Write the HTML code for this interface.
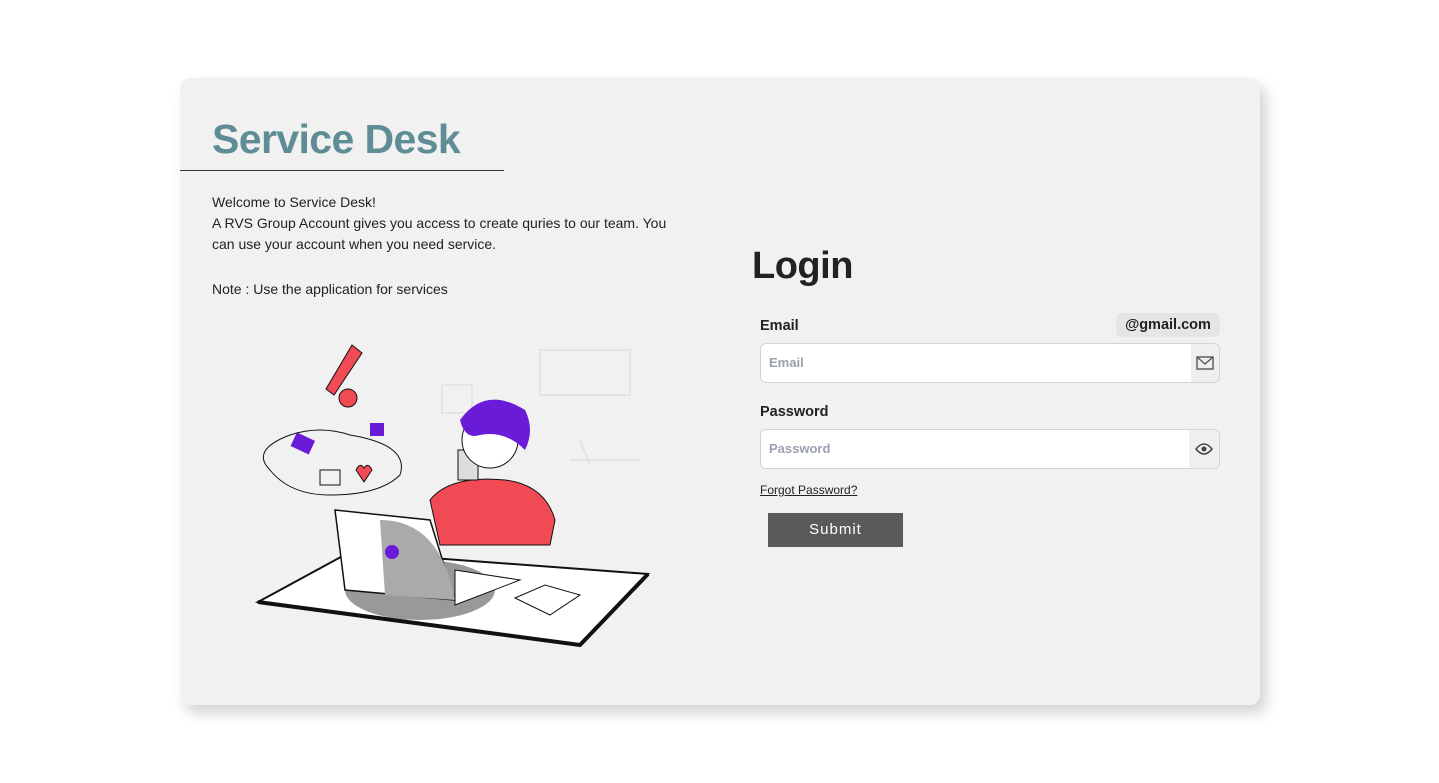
<!DOCTYPE html>
<html><head><meta charset="utf-8"><style>
*{margin:0;padding:0;box-sizing:border-box}
body{width:1439px;height:783px;background:#fff;font-family:"Liberation Sans",sans-serif;position:relative;overflow:hidden}
.card{position:absolute;left:180px;top:78px;width:1080px;height:627px;background:#f1f1f1;border-radius:10px;box-shadow:6px 8px 14px rgba(0,0,0,.18)}
.abs{position:absolute}
h1{position:absolute;left:32px;top:38px;font-size:41px;font-weight:bold;color:#5f8d96;letter-spacing:-0.6px}
.hr{position:absolute;left:0;top:92px;width:324px;height:1px;background:#333}
.txt{position:absolute;left:32px;top:114px;font-size:14px;line-height:21px;color:#222;width:470px}
.lbl{font-size:14.5px;font-weight:bold;color:#222}
.inp{position:absolute;left:580px;width:460px;height:40px;background:#fff;border:1px solid #d2d2d8;border-radius:6px;overflow:hidden}
.inp span{position:absolute;left:8px;top:11px;font-size:13px;color:#9aa0ae;font-weight:bold}
.inp .ic{position:absolute;right:0;top:0;width:28px;height:38px;background:#efefef;display:flex;align-items:center;justify-content:center}
</style></head><body>
<div class="card">
<h1>Service Desk</h1>
<div class="hr"></div>
<div class="txt">Welcome to Service Desk!<br>A RVS Group Account gives you access to create quries to our team. You can use your account when you need service.<br><br><span style="display:inline-block;margin-top:3px">Note : Use the application for services</span></div>
<svg class="abs" style="left:70px;top:255px" width="420" height="320" viewBox="250 333 420 320">
<g fill="none" stroke="#ddd" stroke-width="1.2"><rect x="540" y="350" width="90" height="45"/><rect x="442" y="385" width="30" height="28"/><path d="M580 440 l10 25 M570 460h70"/></g>
<polygon points="258,602 350,552 648,574 580,645" fill="#fff" stroke="#111" stroke-width="2"/>
<path d="M258,602 L580,645 L648,574" stroke="#111" stroke-width="4" fill="none"/>
<ellipse cx="420" cy="590" rx="75" ry="30" fill="#999"/>
<path d="M430 500 q20-25 75-20 q40 5 50 40 l-5 25 h-110z" fill="#f04a55" stroke="#111"/>
<path d="M458 450 v30 h20 v-30z" fill="#ddd" stroke="#111"/>
<circle cx="490" cy="440" r="28" fill="#fff" stroke="#111"/>
<path d="M460 420 q25-35 65-10 q10 20 0 40 q-20-20-45-15 q-15 5-20-15z" fill="#6a1bd8"/>
<polygon points="335,510 430,520 455,600 345,590" fill="#fff" stroke="#111" stroke-width="1.5"/>
<path d="M380 520 q60 0 75 80 l-70-5z" fill="#aaa"/>
<circle cx="392" cy="552" r="7" fill="#6a1bd8"/>
<polygon points="455,570 520,580 455,605" fill="#fff" stroke="#111"/>
<polygon points="515,598 545,585 580,595 550,615" fill="#fff" stroke="#111"/>
<path d="M352 345 l10 8 -28 42 -8-6z" fill="#f04a55" stroke="#111"/>
<circle cx="348" cy="398" r="9" fill="#f04a55" stroke="#111"/>
<rect x="293" y="436" width="20" height="15" fill="#6a1bd8" transform="rotate(25 303 443)"/>
<rect x="370" y="423" width="14" height="13" fill="#6a1bd8"/>
<path d="M356 470 l8 12 8-12 q-4-8-8-2 q-4-6-8 2z" fill="#f04a55" stroke="#111"/>
<path d="M270 470 q-20-20 20-35 q30-10 60 0 q60 10 50 40 q-20 20-70 20 q-40 0-60-25z M320 470 h20 v15 h-20z" fill="none" stroke="#111"/>
</svg>
<div class="abs" style="left:572px;top:167px;font-size:38px;font-weight:bold;color:#222;letter-spacing:-0.5px">Login</div>
<div class="abs lbl" style="left:580px;top:240px">Email</div>
<div class="abs" style="left:936px;top:235px;width:104px;height:24px;background:#e5e5e5;border-radius:6px;font-size:14.5px;font-weight:bold;color:#222;text-align:center;line-height:24px">@gmail.com</div>
<div class="inp" style="top:265px"><span>Email</span><div class="ic"><svg width="18" height="14" viewBox="0 0 18 14"><rect x="1" y="1" width="16" height="12" fill="none" stroke="#555" stroke-width="1.4"/><path d="M1 1l8 7 8-7" fill="none" stroke="#555" stroke-width="1.4"/></svg></div></div>
<div class="abs lbl" style="left:580px;top:326px">Password</div>
<div class="inp" style="top:351px"><span>Password</span><div class="ic" style="width:30px"><svg width="18" height="12" viewBox="0 0 18 12"><path d="M1 6q8-10 16 0q-8 10-16 0z" fill="none" stroke="#444" stroke-width="1.6"/><circle cx="9" cy="6" r="2.5" fill="#444"/></svg></div></div>
<div class="abs" style="left:580px;top:405px;font-size:12px;color:#222;text-decoration:underline">Forgot Password?</div>
<div class="abs" style="left:588px;top:435px;width:135px;height:34px;background:#5a5a5a;color:#fff;font-size:15px;letter-spacing:1px;text-align:center;line-height:34px">Submit</div>
</div>
</body></html>
